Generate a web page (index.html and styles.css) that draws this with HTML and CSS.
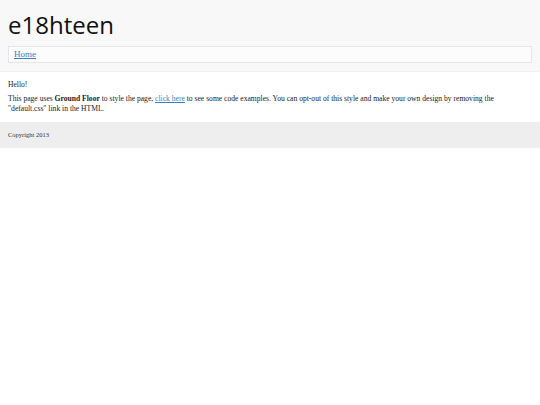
FILE: index.html
```html
<!DOCTYPE html>
<html>
<head>
<meta charset="utf-8">
<link rel="stylesheet" href="styles.css">
</head>
<body>
<header class="site-header">
  <h1 class="logo">e18hteen</h1>
  <nav class="nav"><a href="#">Home</a></nav>
</header>
<main class="content">
  <p>Hello!</p>
  <p>This page uses <strong>Ground Floor</strong> to style the page, <a href="#">click here</a> to see some code examples. You can opt-out of this style and make your own design by removing the "default.css" link in the HTML.</p>
</main>
<footer class="site-footer">Copyright 2013</footer>
</body>
</html>
```
FILE: styles.css
```css
html, body { margin: 0; padding: 0; background: #fff; }
body { font-family: "Liberation Serif", "DejaVu Serif", serif; font-size: 7.6px; line-height: 10px; color: #222; }
.site-header { background: #f8f8f8; border-bottom: 1px solid #f0f0f0; padding: 10px 8px 8px; }
.logo { margin: 0 0 6px; font-family: "Open Sans", sans-serif; font-weight: 500; font-size: 24px; line-height: 30px; color: #111; }
.nav { background: #fcfcfc; border: 1px solid #e6e6e6; padding: 2px 5px; font-size: 9px; line-height: 11px; }
.nav a { color: #3a7fc0; text-decoration: underline; }
.content { padding: 8px 8px 8px; }
.content p { margin: 0 0 4px; }
.content p:last-child { margin-bottom: 0; }
.content a { color: #3a7fc0; }
.site-footer { background: #eee; padding: 8px 8px 9px; font-size: 6.5px; line-height: 9px; color: #333; }
```
